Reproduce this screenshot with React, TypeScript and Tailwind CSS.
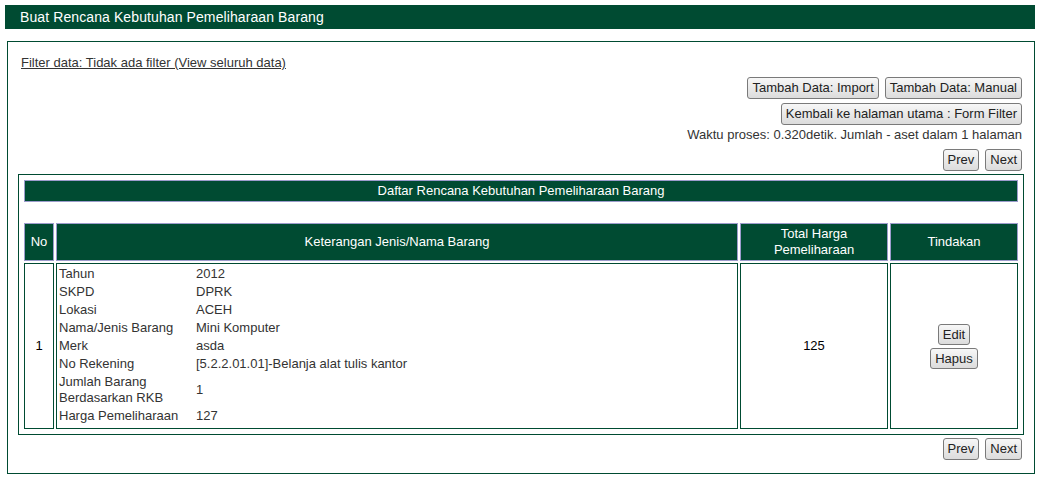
import React from "react";

const GREEN = "bg-[#004b32]";

function Btn({ children, small = false }: { children: React.ReactNode; small?: boolean }) {
  return (
    <button
      type="button"
      className={`${small ? "h-[21px] leading-[19px]" : "h-[22px] leading-[20px]"} px-[4px] rounded-[3px] border border-[#7a7a7a] bg-gradient-to-b from-[#f7f7f7] to-[#dcdcdc] text-[13px] text-[#222]`}
    >
      {children}
    </button>
  );
}

const DETAIL: { label: string; value: string }[] = [
  { label: "Tahun", value: "2012" },
  { label: "SKPD", value: "DPRK" },
  { label: "Lokasi", value: "ACEH" },
  { label: "Nama/Jenis Barang", value: "Mini Komputer" },
  { label: "Merk", value: "asda" },
  { label: "No Rekening", value: "[5.2.2.01.01]-Belanja alat tulis kantor" },
  { label: "Jumlah Barang Berdasarkan RKB", value: "1" },
  { label: "Harga Pemeliharaan", value: "127" },
];

export default function App() {
  return (
    <div className="pt-[5px] pl-[5px] font-['Liberation_Sans',Arial,sans-serif] text-[13px] text-[#333]">
      <div className={`w-[1030px] h-[24px] ${GREEN} text-white text-[14px] tracking-[0.1px] leading-[24px] pl-[15px]`}>
        Buat Rencana Kebutuhan Pemeliharaan Barang
      </div>

      <div className="ml-[2px] mt-[12px] w-[1028px] border border-[#004b32] px-[10px] pt-[13px] pb-[13px]">
        <div className="pl-[3px] leading-[16px]">
          <a href="#" className="underline text-[#333]">
            Filter data: Tidak ada filter (View seluruh data)
          </a>
        </div>

        <div className="pr-[2px] flex flex-col items-end">
          <div className="mt-[6px] flex gap-[6px]">
            <Btn>Tambah Data: Import</Btn>
            <Btn>Tambah Data: Manual</Btn>
          </div>
          <div className="mt-[4px]">
            <Btn>Kembali ke halaman utama : Form Filter</Btn>
          </div>
          <div className="mt-[2px] leading-[16px]">
            Waktu proses: 0.320detik. Jumlah - aset dalam 1 halaman
          </div>
          <div className="mt-[6px] flex gap-[6px]">
            <Btn>Prev</Btn>
            <Btn>Next</Btn>
          </div>
        </div>

        <div className="mt-[3px] border border-[#004b32] p-[3px]">
          <table className="w-full border-separate border-spacing-[2px]">
            <tbody>
              <tr>
                <td
                  colSpan={4}
                  className={`${GREEN} border border-[#9c9ccc] h-[22px] text-center text-white leading-[20px]`}
                >
                  Daftar Rencana Kebutuhan Pemeliharaan Barang
                </td>
              </tr>
              <tr>
                <td colSpan={4} className="h-[17px]"></td>
              </tr>
              <tr className="text-white text-center">
                <td className={`${GREEN} border border-[#9c9ccc] w-[30px] h-[38px] leading-[16px]`}>No</td>
                <td className={`${GREEN} border border-[#9c9ccc] leading-[16px]`}>Keterangan Jenis/Nama Barang</td>
                <td className={`${GREEN} border border-[#9c9ccc] w-[148px] leading-[16px]`}>
                  Total Harga
                  <br />
                  Pemeliharaan
                </td>
                <td className={`${GREEN} border border-[#9c9ccc] w-[128px] leading-[16px]`}>Tindakan</td>
              </tr>
              <tr>
                <td className="border border-[#004b32] text-center align-middle text-black">1</td>
                <td className="border border-[#004b32] px-[2px] pt-[1px] pb-[3px] align-middle">
                  <table className="border-collapse">
                    <tbody>
                      {DETAIL.map((d) => (
                        <tr key={d.label}>
                          <td className="w-[137px] pr-[4px] py-[1px] leading-[16px] align-middle">{d.label}</td>
                          <td className="py-[1px] leading-[16px] align-middle">{d.value}</td>
                        </tr>
                      ))}
                    </tbody>
                  </table>
                </td>
                <td className="border border-[#004b32] text-center align-middle text-black">125</td>
                <td className="border border-[#004b32] align-middle">
                  <div className="flex flex-col items-center gap-[3px]">
                    <Btn small>Edit</Btn>
                    <Btn small>Hapus</Btn>
                  </div>
                </td>
              </tr>
            </tbody>
          </table>
        </div>

        <div className="mt-[3px] pr-[2px] flex justify-end gap-[6px]">
          <Btn>Prev</Btn>
          <Btn>Next</Btn>
        </div>
      </div>
    </div>
  );
}
